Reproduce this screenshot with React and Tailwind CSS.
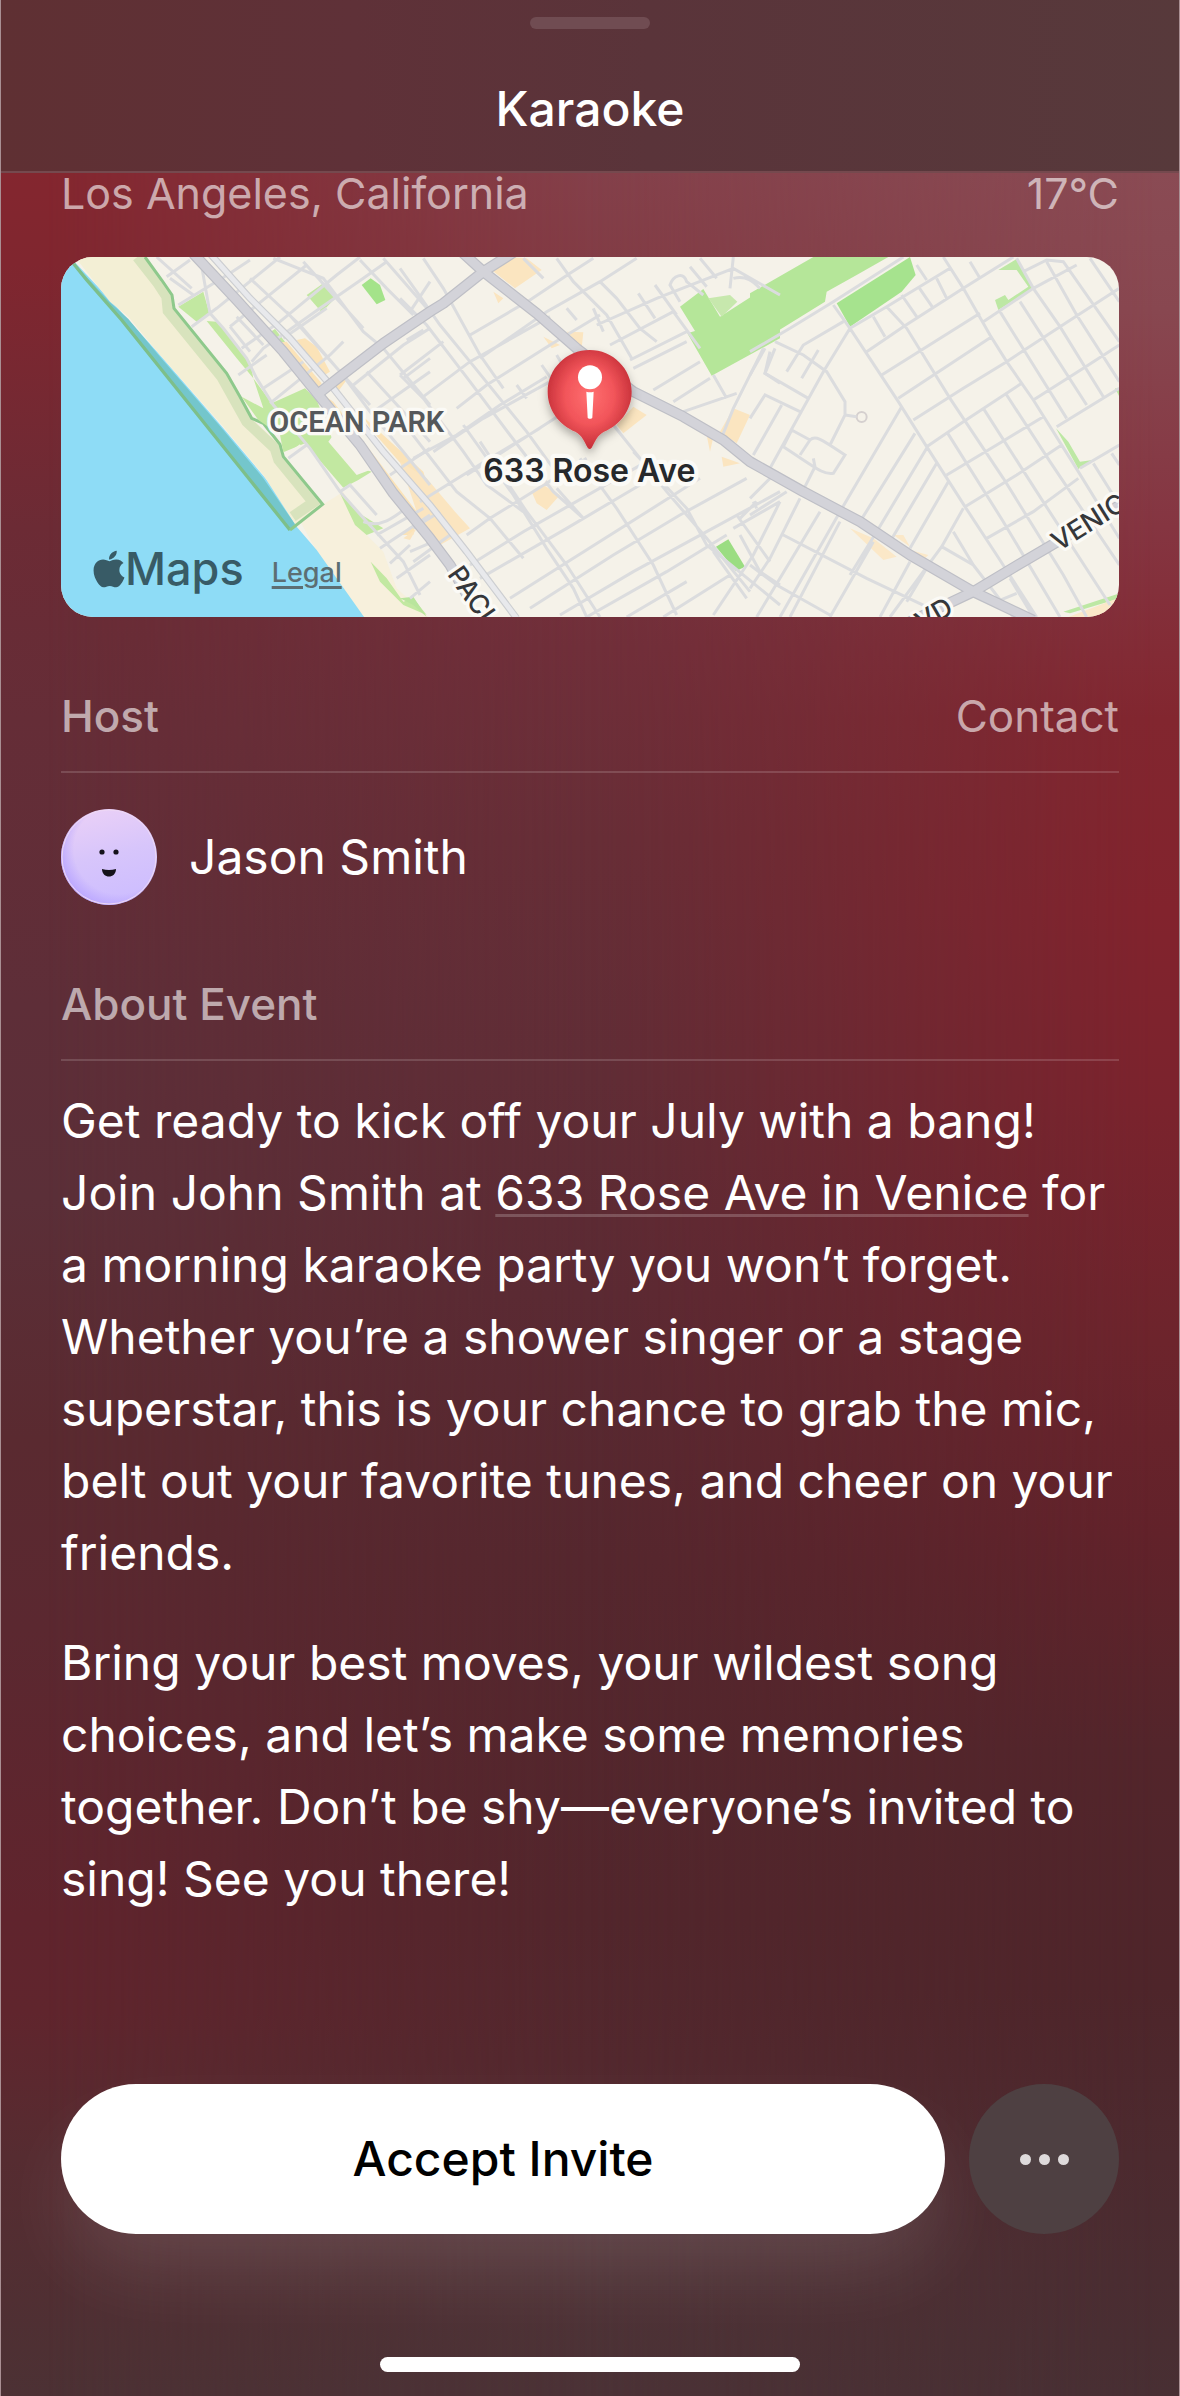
import React from "react";
import { FaApple } from "react-icons/fa";

const minorStreets = [
  {
    shift: "translate(-30 -36)",
    d: "M320 36L425 130M350 95L420 45M385 180L540 85L600 45M425 245L500 190L690 36M540 245L770 60M575 310L690 230L860 90L930 36M565 390L650 330M605 350L640 310L810 190L940 100L1010 50M640 430L760 350M660 475L840 330L880 290M700 280L830 190M900 370L1000 295M910 420L1060 300L1140 250M560 215L640 300M540 245L600 320M670 40L820 100L940 260L1000 310L1140 480M760 50L940 250M600 100L750 240L870 380L960 500L1060 620L1140 720M710 200L790 290L960 480M930 45L1010 130L1090 210M1000 40L1140 200M1140 110L1080 200M1060 400L1140 340M970 500L1140 380M1020 690L1140 610M950 380L1060 500L1140 590M480 205L520 250L590 340L620 400L670 480L780 610L870 740L950 830L1060 950L1110 1050M450 36L480 205L425 245M715 640L770 600M870 740L900 720L980 810M940 830C990 850 1030 820 1080 780M990 910L1140 810M1020 955L1080 900M1040 1000L1140 930M980 870L1120 790M1080 1060L1140 1010M360 100L430 150",
  },
  {
    shift: "translate(1020 -36)",
    d: "M20 285L70 255M0 390L130 290M210 270L390 165L510 85L580 40M240 340L440 200L600 110L710 40M70 455L210 350L450 215M170 490L260 420L450 300M170 570L300 480L440 395M100 620L250 520L450 410M60 770L270 640M200 690L480 510M40 640L170 570M270 640L420 550M450 300L600 210M590 240L770 160L1000 70L1140 150M630 300L820 200M690 345L860 260M700 370L860 290M760 435L900 350M820 470L930 400M850 500L1010 445M200 870L270 820L560 640M210 960L370 860L740 650M240 1000L500 850L720 720M330 1060L520 940L900 700M390 1090L640 930L840 810L1040 700M480 1110L700 980L920 860L1140 740M560 1116L800 980L980 870M680 1116L860 1010M790 1116L990 990M40 850L120 800M40 950L150 870M30 920L100 890M70 40L130 130L240 330L310 430M0 70L50 140L120 240L210 350L380 560L460 670M0 160L80 240L210 410L330 570L460 740L550 820M0 390L70 460L190 620L260 720L370 800M0 520L170 740L270 820L370 940M240 590L380 800L500 960L600 1116M190 540L340 750L440 910L520 1030L560 1116M470 730L550 820M540 640L650 790L760 960L830 1110M640 540L800 740L920 880L1050 1040M700 620L860 790L920 900L1140 1080M470 40L520 110L620 210L695 340M600 110L650 160L720 250L770 290M500 190L530 225M580 190L610 260M715 145L765 220M765 120L830 210M840 170L810 120C820 90 850 80 860 110L910 150M870 65L920 125M900 40L950 100M820 200L900 310M940 390L980 460M1000 36L990 130M1000 100C1040 90 1060 110 1080 130M1090 310L1000 490L960 590M1110 320L1095 385L1140 415M1010 810L1110 950M1020 870L1080 980L1140 1020M940 920L1040 1060M350 420L380 460M425 360L460 410M470 330L500 380M370 40L430 100M1020 820L1070 770M1000 850L1140 770M940 1110L1060 930L1140 770",
  },
  {
    shift: "translate(2070 -36)",
    d: "M0 320L120 250L250 170L460 36M300 250L410 185L600 70M350 320L460 245L640 130L790 36M395 390L690 205M445 460L725 275M490 525L640 430L770 350L930 245L1108 130M530 605L640 530L815 415M590 690L740 600L880 515M645 785L800 690L935 600M710 880L850 800L985 700M700 230L850 130L980 60M850 465L1000 370L1108 300M920 545L1108 430M990 670L1108 600M660 50L690 100M820 80L890 45L940 50L1108 290M250 180L300 250L445 470L530 605L645 785L740 930L860 1116M410 185L470 250L600 460L760 700L940 990L1010 1116M500 60L530 105M505 125L550 190M455 150L500 215M370 215L405 275M560 100L590 160M580 36L640 130L720 270L770 350L850 465L985 680L1108 880M800 40L850 130L930 245L1060 455M890 50L980 210L1108 410M1020 40L1108 170M750 200L950 520M810 170L1010 480M590 560L760 830L930 1116M700 490L860 740L1080 1080M770 450L900 650L1108 960M1030 655L1108 780M1085 625L1108 660M455 485L270 800L90 1116M495 565L330 830M530 610L380 860L300 990M560 655L420 890M595 710L480 910M640 790L575 905L420 1116M610 860L670 960M575 905L670 960L790 1116M0 760L60 700M0 810L110 740M210 800L20 1116M270 830L120 1116M370 890L240 1116M480 950L390 1116M530 970L470 1070M150 760L60 940L0 1030M100 870L350 1000L540 1090M0 960L80 1020L240 1110M10 770L20 790M300 250L220 380L60 670M75 290L160 330L230 380L285 470L285 510L240 600M285 510L320 515M280 230L160 300L110 380M205 315L155 400M75 310L45 385L175 460M0 390L45 310M0 520L45 450L150 500M95 480L10 630M125 555L180 585C195 570 210 580 285 630L250 685C220 690 200 670 100 605L125 555M180 585L150 630M190 640L195 665L165 725M780 1000L850 1116M740 1070L800 1045",
  },
];

const mainRoads = [
  "M400 -10L530 129L670 284L800 444L900 564L1000 709L1110 844L1170 924L1230 1030",
  "M770 414L840 359L970 259L1110 164L1150 139L1270 44L1370 -20",
  "M1200 -20L1270 44L1430 169L1550 274L1720 404L1870 479L1990 549L2070 614L2230 704L2400 794L2550 894L2740 1004L2920 1090",
  "M2550 1094L2740 1004L2890 914L3180 744",
];

function EventMap() {
  return (
    <svg
      viewBox="0 0 3180 1080"
      preserveAspectRatio="xMidYMid slice"
      className="block h-full w-full"
      role="img"
      aria-label="Map of Venice around 633 Rose Ave"
    >
      <defs>
        <radialGradient id="pin" cx="50%" cy="46%" r="58%">
          <stop offset="0" stopColor="#ff6f70" />
          <stop offset="0.5" stopColor="#f2555a" />
          <stop offset="1" stopColor="#bd2832" />
        </radialGradient>
        <filter id="pinShadow" x="-30%" y="-30%" width="160%" height="160%">
          <feDropShadow dx="0" dy="14" stdDeviation="14" floodColor="#000" floodOpacity="0.3" />
        </filter>
      </defs>
      <rect width="3180" height="1080" fill="#f5f2e9" />

      {/* Coast, beach and parks on the west side */}
      <g transform="translate(-30 -36)">
        <path fill="#f7f0dc" d="M700 740L820 778L880 740L940 860L1000 920L1040 1030L1150 1130H920Z" />
        <path fill="#8edcf6" d="M30 36H60L190 175L330 330L520 550L680 740L740 845L800 915L860 1000L945 1120H30Z" />
        <path fill="#f3efd5" d="M75 36H285L335 105L368 150L370 190L530 385L605 520L690 600L700 635L820 778L735 838L640 690L520 545L330 330L235 215L180 170Z" />
        <path fill="none" stroke="#d8e3bd" strokeWidth="32" d="M262 36L322 112L350 155L354 198L515 396L590 530L675 610L686 645L790 772L728 815" />
        <path fill="#74c6cc" d="M66 48L180 172L235 222L330 335L520 555L640 700L735 838L718 856L600 700L215 225Z" />
        <path fill="none" stroke="#7dbf8a" strokeWidth="10" d="M66 50L110 105L215 225L600 705L720 855" />
        <path fill="none" stroke="#8ec98c" strokeWidth="9" d="M720 855L818 778L700 635L690 598L640 535L605 520L570 455L530 385L372 190L366 150L335 105L285 36" />
        <path fill="#c2e8a1" d="M385 185L460 140L478 205L440 230ZM470 228L500 230L600 350L610 400L665 475L765 430L800 465L850 590L905 660L965 680L925 705L880 728L765 595L700 622L690 570L625 525L575 455L640 490L610 400L560 340ZM770 150L820 115L860 155L815 202ZM870 745L920 800L1000 850L950 870L915 840ZM962 950L1010 1000L1060 1070L1090 1060L1130 1110L1060 1080L990 1010ZM655 265L675 252L705 290L690 296Z" />
        <path fill="#f5f2e9" d="M835 590L850 570L960 675L920 690ZM712 625L750 598L760 615L730 650Z" />
        <path fill="#a4e38a" d="M935 120L962 100L990 120L1006 165L980 178Z" />
        <path fill="#fbe3b8" d="M690 292L710 290L815 415L800 435ZM740 285L765 280L800 305L840 380L820 392ZM855 400L890 405L860 445ZM820 450L850 470L1085 780L1140 850L1120 870L1050 770ZM940 515L1120 680L1135 730L1100 710L960 550ZM1055 870L1095 835L1090 870Z" />
      </g>
      {/* Blocks around the pin */}
      <g transform="translate(1020 -36)">
        <path fill="#fbe5c0" d="M275 75L320 36L380 40L425 75L345 130ZM280 140L310 160L295 175ZM430 275L480 300L455 310ZM500 260L550 262L545 310ZM650 540L700 485L740 510L670 565ZM750 455L795 470L770 480ZM960 560L1000 490L1050 510L1010 595ZM915 545L945 555L930 620ZM965 635L1020 655L970 665ZM395 740L430 720L480 750L440 795L410 775ZM0 650L80 700L165 800L210 850L120 900L60 830ZM10 880L50 850L30 885Z" />
        <path fill="#b5e699" d="M840 185L910 132L960 215L1140 100V280L935 392L862 265L885 258Z" />
        <path fill="#c7e8ad" d="M925 160L990 150L1012 170L965 215Z" />
        <path fill="#9bdd82" d="M948 905L985 883L1035 965L1008 978Z" />
        <path fill="#b9e59d" d="M0 1060L40 1055L80 1116L40 1080Z" />
      </g>
      {/* Parks and blocks on the east side */}
      <g transform="translate(2070 -36)">
        <path fill="#b5e699" d="M0 145L190 36H415L320 90L230 140L225 170L0 310Z" />
        <path fill="#a6e38e" d="M260 175L480 36L497 90L455 140L300 245Z" />
        <path fill="#bde8a4" d="M745 75L800 42L850 130L745 195L735 165L765 150L775 165L835 125L800 75ZM918 550L955 590L990 650L1028 645L985 672ZM1095 430L1108 432V455ZM940 1100L1108 1045V1060L960 1105Z" />
        <path fill="#fbe8c8" d="M955 1116L1108 1058V1116ZM300 850L370 880L440 935L400 945ZM430 870L460 870L480 905ZM480 915L535 930L520 945Z" />
        <circle cx="335" cy="516" r="15" fill="none" stroke="#d5d0cf" strokeWidth="6" />
      </g>

      {minorStreets.map((s) => (
        <path key={s.shift} transform={s.shift} d={s.d} fill="none" stroke="#dbdcde" strokeWidth="9" />
      ))}

      <path d="M450 -10L570 124L690 244L820 394L970 584L1110 744L1220 884L1370 1084" fill="none" stroke="#ccced1" strokeWidth="22" />
      <path d="M450 -10L570 124L690 244L820 394L970 584L1110 744L1220 884L1370 1084" fill="none" stroke="#e8e9ec" strokeWidth="15" />
      <g fill="none" strokeLinejoin="round">
        {mainRoads.map((d) => (
          <path key={d} d={d} stroke="#bebfc6" strokeWidth="33" />
        ))}
        {mainRoads.map((d) => (
          <path key={d} d={d} stroke="#d3d3d9" strokeWidth="26" />
        ))}
      </g>

      <g
        fontFamily="Inter, sans-serif"
        fontWeight="500"
        fontSize="80"
        fill="#35373a"
        stroke="#fbfaf6"
        strokeWidth="20"
        strokeLinejoin="round"
        paintOrder="stroke"
      >
        <text transform="translate(1160 952) rotate(55)">PACI</text>
        <text transform="translate(2586 1124) rotate(-30)">VD</text>
        <text transform="translate(2996 884) rotate(-32)">VENIC</text>
        <text x="628" y="524" fontFamily="Roboto, sans-serif" fontSize="87" fontWeight="600" fill="#55585b">
          OCEAN PARK
        </text>
        <text x="1588" y="676" textAnchor="middle" fontSize="96" fontWeight="600" fill="#26282b" strokeWidth="26">
          633 Rose Ave
        </text>
      </g>

      <g transform="translate(1020 -36)">
        <path
          filter="url(#pinShadow)"
          fill="url(#pin)"
          d="M569 315C638 315 695 371 695 440C695 495 660 540 612 560C592 570 584 592 575 608Q569 616 563 608C554 592 546 570 526 560C478 540 443 495 443 440C443 371 500 315 569 315Z"
        />
        <circle cx="570" cy="397" r="36" fill="#fff" />
        <path fill="#fff" d="M559 440Q570 444 581 440L577 518Q570 525 563 518Z" />
      </g>
    </svg>
  );
}

function Backdrop() {
  return (
    <div aria-hidden="true" className="absolute inset-0 -z-10">
      <div className="absolute inset-0 bg-[linear-gradient(to_bottom,#84262f_7%,#80262f_11%,#6c2b35_22%,#652d37_30%,#5e2e38_42%,#5b2f38_50%,#5a2a30_60%,#5b2830_68%,#60242d_80%,#60252d_84%,#562c31_90%,#4c3134_100%)]" />
      <div className="absolute inset-0 bg-[linear-gradient(to_bottom,#84404a_7%,#80373f_16%,#702f3a_27%,#672e37_35%,#602d36_45%,#5b2a33_54%,#55272e_65%,#52262c_80%,#53282e_86%,#503337_94%,#4b3236_100%)] [mask-image:linear-gradient(to_right,transparent_4%,black_50%)]" />
      <div className="absolute inset-0 bg-[linear-gradient(to_bottom,#8a4b54_7%,#884750_13%,#853541_22%,#82262f_30%,#82232d_38%,#7b232d_46%,#6d242c_56%,#62222a_64%,#53252b_73%,#4e252a_83%,#4c2a2f_90%,#482f33_100%)] [mask-image:linear-gradient(to_right,transparent_50%,black_98%)]" />
    </div>
  );
}

export default function App() {
  return (
    <div className="relative isolate flex min-h-screen flex-col border-x border-[#a98f93] font-[Inter,sans-serif] text-white">
      <Backdrop />

      <header className="flex flex-col items-center border-b-2 border-[#75494e] bg-[linear-gradient(to_right,#5f3033,#5f3138_30%,#5a343a_55%,#57393b)] pt-[17px] pb-8">
        <div className="h-3 w-[120px] rounded-full bg-[#704c52]" />
        <h1 className="mt-[50px] text-[48px] leading-[60px] font-medium">Karaoke</h1>
      </header>

      <main className="px-[60px]">
        <div className="flex justify-between text-[43px] leading-10 text-white/60">
          <p>Los Angeles, California</p>
          <p>17°C</p>
        </div>

        <div className="relative mt-11 h-[360px] overflow-hidden rounded-[32px]">
          <EventMap />
          <div className="absolute bottom-5 left-8 flex items-center text-[#385b66]">
            <FaApple className="h-[42px] w-8" aria-label="Apple" />
            <span className="text-[45px] leading-[56px] font-medium">Maps</span>
            <a
              href="#legal"
              className="ml-7 self-end text-[27px] leading-[48px] font-medium text-[#5c6e73] underline decoration-[3px] underline-offset-4"
            >
              Legal
            </a>
          </div>
        </div>

        <section className="mt-[69px]">
          <div className="flex justify-between border-b-2 border-white/15 pb-[25px] text-[44px] leading-[60px] text-white/60">
            <h2 className="font-medium">Host</h2>
            <button type="button">Contact</button>
          </div>
          <div className="flex items-center gap-8 pt-9">
            <svg viewBox="0 0 96 96" className="size-24" role="img" aria-label="Jason Smith">
              <defs>
                <linearGradient id="face" x1="0.3" y1="0" x2="0.55" y2="1">
                  <stop offset="0" stopColor="#ead0f7" />
                  <stop offset="0.5" stopColor="#d7c5fb" />
                  <stop offset="1" stopColor="#cdbdff" />
                </linearGradient>
                <radialGradient id="faceRim" cx="0.6" cy="0.42" r="0.62">
                  <stop offset="0.75" stopColor="#b9a5ff" stopOpacity="0" />
                  <stop offset="1" stopColor="#b9a5ff" stopOpacity="0.9" />
                </radialGradient>
              </defs>
              <circle cx="48" cy="48" r="48" fill="url(#face)" />
              <circle cx="48" cy="48" r="48" fill="url(#faceRim)" />
              <circle cx="48" cy="48" r="47" fill="none" stroke="#eed8f5" strokeWidth="1" />
              <circle cx="41" cy="43" r="2.6" fill="#15121a" />
              <circle cx="55" cy="43" r="2.6" fill="#15121a" />
              <path d="M41 60Q48 62 55 60C55 70 41 70 41 60Z" fill="#15121a" />
            </svg>
            <p className="text-[48px] leading-[60px]">Jason Smith</p>
          </div>
        </section>

        <section className="mt-[69px]">
          <h2 className="border-b-2 border-white/15 pb-[25px] text-[44px] leading-[60px] font-medium text-white/60">
            About Event
          </h2>
          <div className="flex flex-col gap-[38px] pt-6 text-[48px] leading-[72px]">
            <p>
              Get ready to kick off your July with a bang! Join John Smith at{" "}
              <a
                href="#map"
                className="underline decoration-white/20 decoration-[3px] underline-offset-4 [text-decoration-skip-ink:none]"
              >
                633 Rose Ave in Venice
              </a>{" "}
              for a morning karaoke party you won’t forget. Whether you’re a shower singer or a stage
              superstar, this is your chance to grab the mic, belt out your favorite tunes, and cheer on your
              friends.
            </p>
            <p>
              Bring your best moves, your wildest song choices, and let’s make some memories together. Don’t be
              shy—everyone’s invited to sing! See you there!
            </p>
          </div>
        </section>
      </main>

      <footer className="mt-auto flex flex-col items-center px-[60px] pt-16 pb-6">
        <div className="flex w-full gap-6">
          <button
            type="button"
            className="h-[150px] flex-1 rounded-full bg-white text-[48px] leading-[60px] font-medium text-black shadow-[0_40px_80px_-10px_rgba(255,255,255,0.12)]"
          >
            Accept Invite
          </button>
          <button
            type="button"
            aria-label="More options"
            className="flex size-[150px] items-center justify-center gap-2 rounded-full bg-[#4e4042]"
          >
            <span className="size-[11px] rounded-full bg-[#dedadb]" />
            <span className="size-[11px] rounded-full bg-[#dedadb]" />
            <span className="size-[11px] rounded-full bg-[#dedadb]" />
          </button>
        </div>
        <div className="mt-[123px] h-[15px] w-[420px] rounded-full bg-white" />
      </footer>
    </div>
  );
}
